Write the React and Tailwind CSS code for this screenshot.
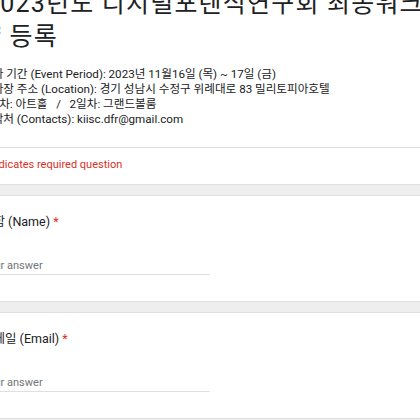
export default function App() {
  const font = "font-['Roboto','Noto_Sans_CJK_KR',sans-serif]";
  return (
    <div className={`w-[420px] h-[420px] overflow-hidden bg-[#eeeeee] ${font}`}>
      <div className="flex flex-col gap-[10px] ml-[-18px] w-[480px]">
        {/* header card */}
        <div className="bg-white border-b border-[#e0e0e0]">
          <div className="mt-[-13px] text-[25px] leading-[33px] text-[#202124] whitespace-nowrap tracking-[1.2px]">
            <div className="ml-[3px]">2023년도 디지털포렌식연구회 최종워크</div>
            <div className="ml-[-4px]">샵 등록</div>
          </div>
          <div className="mt-[14px] text-[11.6px] leading-[15px] text-[#202124] whitespace-pre">
            <div>행사 기간 (Event Period): 2023년 11월16일 (목) ~ 17일 (금)</div>
            <div>행사장 주소 (Location): 경기 성남시 수정구 위례대로 83 밀리토피아호텔</div>
            <div>1일차: 아트홀   /   2일차: 그랜드볼룸</div>
            <div>연락처 (Contacts): kiisc.dfr@gmail.com</div>
          </div>
          <div className="mt-[20px] border-t border-[#dadce0] pt-[9px] pb-[12px] text-[11px] leading-[15px] text-[#d93025]">
            * Indicates required question
          </div>
        </div>
        {[
          "성함 (Name)",
          "이메일 (Email)",
        ].map((q) => (
          <div key={q} className="bg-white border-y border-[#e0e0e0] h-[107px] pt-[17px]">
            <div className="text-[12.5px] leading-[18px] text-[#202124]">
              {q} <span className="text-[#d93025]">*</span>
            </div>
            <div className="mt-[27px] w-[228px] border-b border-[#e0e0e0] pb-[1px] text-[11px] leading-[15px] text-[#70757a]">
              Your answer
            </div>
          </div>
        ))}
      </div>
    </div>
  );
}
